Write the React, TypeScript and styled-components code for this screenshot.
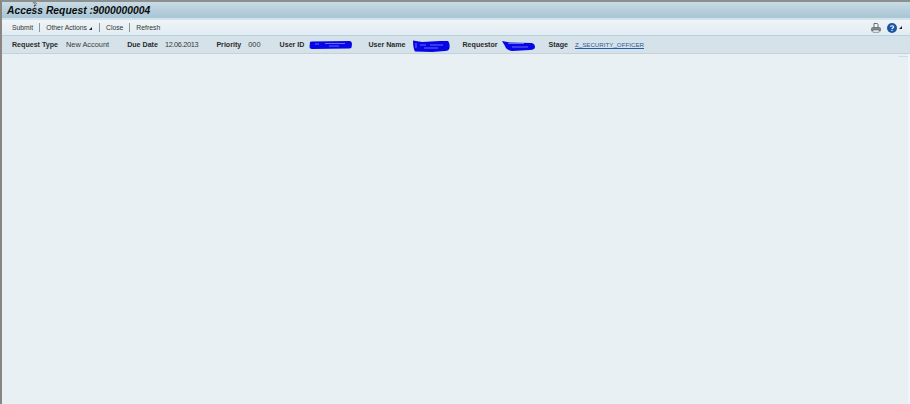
import * as React from 'react';
import styled, { createGlobalStyle } from 'styled-components';

const GlobalStyle = createGlobalStyle`
    html, body {
        margin: 0;
        padding: 0;
        background: #e8f0f3;
    }
    body {
        font-family: "Liberation Sans", Arial, sans-serif;
    }
`;

const Page = styled.div`
    width: 910px;
    height: 404px;
    box-sizing: border-box;
    display: flex;
    flex-direction: column;
    overflow: hidden;
    border-top: 2px solid #8c9090;
    border-left: 2px solid #8a8580;
    background: #e8f0f3;
    position: relative;
`;

const TitleBar = styled.div`
    height: 16px;
    flex: none;
    display: flex;
    align-items: center;
    padding-left: 5px;
    background: linear-gradient(to bottom, #c9dce6 0%, #b5cedb 55%, #a9c6d5 100%);
    border-bottom: 2px solid #d3e3ec;
`;

const Title = styled.h1`
    margin: 0;
    font-size: 10.3px;
    font-weight: bold;
    font-style: italic;
    color: #0c0c0c;
`;

const Toolbar = styled.div`
    height: 15px;
    flex: none;
    display: flex;
    align-items: center;
    padding: 0 7px 0 10px;
    background: linear-gradient(to bottom, #eef4f7, #e2ecf1);
    border-bottom: 1px solid #b6d0e0;
`;

const ToolButton = styled.span`
    font-size: 6.8px;
    color: #333;
    white-space: nowrap;
`;

const Separator = styled.span`
    width: 1px;
    height: 9px;
    margin: 0 6px;
    background: #8a979d;
`;

const Caret = styled.span`
    display: inline-block;
    margin: 0 1px 0 2px;
    width: 0;
    height: 0;
    border-style: solid;
    border-width: 0 0 3px 3px;
    border-color: transparent transparent #222 transparent;
`;

const ToolIcons = styled.div`
    margin-left: auto;
    display: flex;
    align-items: center;
    gap: 6px;
`;

const HelpMenu = styled.span`
    display: flex;
    align-items: center;
`;

const InfoBar = styled.div`
    height: 17px;
    flex: none;
    display: flex;
    align-items: center;
    padding-left: 10px;
    background: #d5e2e9;
    border-bottom: 1px solid #c5d3d9;
`;

const Field = styled.div<{ $gap: number }>`
    display: flex;
    align-items: center;
    margin-right: ${(props) => props.$gap}px;
    white-space: nowrap;
`;

const Label = styled.span<{ $gap: number }>`
    font-size: 7.1px;
    font-weight: bold;
    color: #2b2b2b;
    margin-right: ${(props) => props.$gap}px;
`;

const Value = styled.span`
    font-size: 7.4px;
    color: #3a3a3a;
`;

const DateValue = styled(Value)`
    letter-spacing: -0.35px;
`;

const StageLink = styled.a`
    font-size: 6.2px;
    color: #2a5c9c;
    text-decoration: underline;
`;

const Content = styled.main`
    flex: 1;
    background: #e8f0f3;
    border-right: 2px solid #eff5fb;
`;

const CornerMark = styled.div`
    position: absolute;
    top: 54px;
    right: 2px;
    width: 10px;
    height: 1px;
    background: #c8e0ee;
`;

const Cursor = styled.svg`
    position: absolute;
    top: -2px;
    left: 28px;
`;

const ScribbleSvg = styled.svg<{ $drop: number }>`
    display: block;
    margin-top: ${(props) => props.$drop}px;
`;

const Scribble: React.FunctionComponent<{ width: number; height: number; drop: number; d: string; streak: string }> = ({
    width,
    height,
    drop,
    d,
    streak,
}) => (
    <ScribbleSvg $drop={drop} width={width} height={height} viewBox={`0 0 ${width} ${height}`}>
        <path d={d} fill="#0707e6" />
        <path d={streak} fill="none" stroke="#8f9cf0" strokeWidth="0.7" />
    </ScribbleSvg>
);

const PrintIcon = () => (
    <svg width="10" height="10" viewBox="0 0 10 10">
        <path d="M3 0.5 H6.3 L7 1.5 V5 H3 Z" fill="#f2f4f5" stroke="#4a4f52" strokeWidth="0.8" />
        <path d="M1.5 4.5 H8.5 Q9.6 4.5 9.6 5.8 V8 H0.4 V5.8 Q0.4 4.5 1.5 4.5 Z" fill="#7f898e" stroke="#555" strokeWidth="0.5" />
        <rect x="2" y="7" width="6" height="2.5" fill="#e4e9ec" stroke="#666" strokeWidth="0.5" />
    </svg>
);

const HelpIcon = () => (
    <svg width="10" height="10" viewBox="0 0 10 10">
        <circle cx="5" cy="5" r="5" fill="#1c55a5" />
        <path d="M3.4 3.8 C3.5 2.4 6.6 2.3 6.6 3.9 C6.6 5 5 4.9 5 6" fill="none" stroke="#fff" strokeWidth="1.2" />
        <rect x="4.4" y="6.8" width="1.2" height="1.2" fill="#fff" />
    </svg>
);

export default function App() {
    return (
        <>
            <GlobalStyle />
            <Page>
                <TitleBar>
                    <Title>Access Request :9000000004</Title>
                </TitleBar>
                <Toolbar>
                    <ToolButton>Submit</ToolButton>
                    <Separator />
                    <ToolButton>
                        Other Actions
                        <Caret />
                    </ToolButton>
                    <Separator />
                    <ToolButton>Close</ToolButton>
                    <Separator />
                    <ToolButton>Refresh</ToolButton>
                    <ToolIcons>
                        <PrintIcon />
                        <HelpMenu>
                            <HelpIcon />
                            <Caret />
                        </HelpMenu>
                    </ToolIcons>
                </Toolbar>
                <InfoBar>
                    <Field $gap={18}>
                        <Label $gap={8}>Request Type</Label>
                        <Value>New Account</Value>
                    </Field>
                    <Field $gap={18}>
                        <Label $gap={7}>Due Date</Label>
                        <DateValue>12.06.2013</DateValue>
                    </Field>
                    <Field $gap={19}>
                        <Label $gap={7}>Priority</Label>
                        <Value>000</Value>
                    </Field>
                    <Field $gap={16}>
                        <Label $gap={5}>User ID</Label>
                        <Scribble
                            width={43}
                            height={8}
                            drop={0}
                            d="M1 1 Q1 0.4 3 0.4 L41 0 Q43 0.5 43 3 L42.5 6.5 Q42 7.6 40 7.6 L3 8 Q0.5 8 0.5 6 Z"
                            streak="M6 3 H10 M16 2.5 H36 M20 5 H30"
                        />
                    </Field>
                    <Field $gap={13}>
                        <Label $gap={6}>User Name</Label>
                        <Scribble
                            width={38}
                            height={12}
                            drop={3}
                            d="M1 0.5 L10 2 L28 1 L36 1 Q38 3 37.5 8 Q37 11 33 11 L20 12 L3 11.5 Q1 8 1 0.5 Z"
                            streak="M4 3 V8 M8 5 H14 M18 5 H31 M12 8 H26"
                        />
                    </Field>
                    <Field $gap={14}>
                        <Label $gap={4}>Requestor</Label>
                        <Scribble
                            width={33}
                            height={10}
                            drop={3}
                            d="M0 0 L8 1.5 L30 2 Q33 3 33 6 Q33 8.5 28 9 L10 10 Q4 9 3 5 Z"
                            streak="M6 2.5 H22 M10 6 H26"
                        />
                    </Field>
                    <Field $gap={0}>
                        <Label $gap={7}>Stage</Label>
                        <StageLink href="#">Z_SECURITY_OFFICER</StageLink>
                    </Field>
                </InfoBar>
                <Content />
                <CornerMark />
                <Cursor width="9" height="8" viewBox="0 0 9 8">
                    <path d="M1 0 L6 5.5 L4 5.5 L5 7.5 M3 1 L7 4" fill="none" stroke="#444" strokeWidth="0.7" />
                </Cursor>
            </Page>
        </>
    );
}
